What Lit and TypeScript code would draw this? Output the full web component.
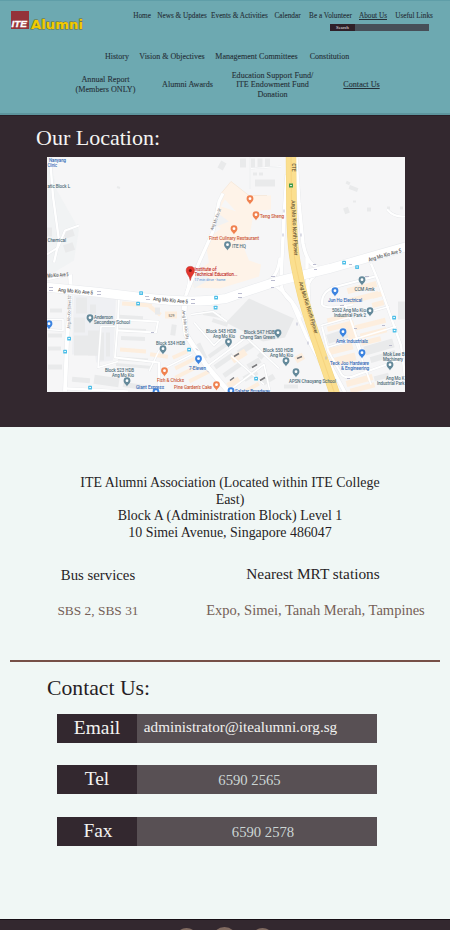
import { LitElement, html, svg, css } from "lit";
import { customElement } from "lit/decorators.js";

type Label = [text: string, x: number, y: number, width: number, kind: string, rotate?: number];
type Pin = [x: number, y: number, kind: string];

const LABELS: Label[] = [
  ["Nanyang", 49, 161.2, 17, "shop"],
  ["Clinic", 47.5, 166.2, 9.5, "shop"],
  ["atic Block L", 47.5, 187, 22.5, "place"],
  ["Chemical", 47.5, 241, 18.5, "place"],
  ["Teng Sheng", 260, 217.5, 24, "food"],
  ["First Culinary Restaurant", 209, 239.5, 50, "food"],
  ["ITE HQ", 232, 247.5, 14, "place"],
  ["Institute of", 194.5, 270.5, 22, "main"],
  ["Technical Education...", 194.5, 275.5, 43, "main"],
  ["17 min drive - home", 194.5, 280, 31, "note"],
  ["Mo Kio Ave 5", 47.5, 277, 21, "road", -4],
  ["Ang Mo Kio Ave 5", 58, 291, 35, "road", 5],
  ["Ang Mo Kio Ave 5", 153, 300, 35, "road", 5],
  ["Ang Mo Kio Ave 5", 369, 261, 34, "road", -16],
  ["Ang Mo Kio Street 52", 70, 328, 33, "lane", -88],
  ["Ang Mo Kio St", 213, 230, 23, "lane", -69],
  ["Ang Mo Kio Str", 182, 310, 29, "lane", 82],
  ["CTE", 292, 163, 8, "fly", 90],
  ["Ang Mo Kio North Flyover", 291.5, 200, 55, "fly", 87],
  ["Ang Mo Kio North Flyover", 299, 282, 54, "fly", 73],
  ["Anderson", 94, 318, 19, "place"],
  ["Secondary School", 94, 323, 36, "place"],
  ["Block 534 HDB", 156, 344, 29, "place"],
  ["7-Eleven", 189, 369, 17, "shop"],
  ["Block 523 HDB", 105, 371, 29, "place"],
  ["Ang Mo Kio", 112, 376, 22, "place"],
  ["Fish & Chicks", 157, 381.5, 27, "food"],
  ["Giant Express", 136, 388, 28, "shop"],
  ["Pine Garden's Cake", 174, 388, 38, "food"],
  ["Block 543 HDB", 206, 332, 30, "place"],
  ["Ang Mo Kio", 213, 337, 22, "place"],
  ["Block 547 HDB", 244, 333, 31, "place"],
  ["Cheng San Green", 240, 338, 35, "place"],
  ["Block 550 HDB", 263, 351, 30, "place"],
  ["Ang Mo Kio", 270, 356, 23, "place"],
  ["APSN Chaoyang School", 289, 382.5, 47, "place"],
  ["Salatar Broadway", 235, 392.3, 35, "shop"],
  ["CCM Amk", 354.5, 290.5, 20, "place"],
  ["Jun Ho Electrical", 328, 301.5, 34, "shop"],
  ["5062 Ang Mo Kio", 332, 311.5, 34, "place"],
  ["Industrial Park 2", 334, 316.5, 32, "place"],
  ["Amk Industrials", 336, 342.5, 32, "shop"],
  ["Teck Joo Hardware", 330, 364, 39, "shop"],
  ["& Engineering", 341, 369, 28, "shop"],
  ["Mok Lee B", 383, 355, 21.5, "place"],
  ["Machinery", 383, 360, 20, "place"],
  ["Ang Mo K", 386, 379, 18.5, "place"],
  ["Industrial Park", 377, 384, 27.5, "place"],
  ["529", 168.5, 316, 6, "tag"],
];

const PINS: Pin[] = [
  [250, 199, "food"], [256, 215, "food"], [234, 229, "food"], [227.5, 245, "place"],
  [90, 318, "place"], [163, 349, "place"], [198.5, 359, "shop"], [164.5, 371, "food"],
  [127, 381, "place"], [216.5, 385, "food"], [228.5, 342, "place"], [278, 333, "place"],
  [286, 361, "place"], [296, 372, "place"], [231, 391, "shop"], [362, 280, "place"],
  [335, 291, "shop"], [370, 311, "place"], [343, 332, "shop"], [362, 353, "shop"],
  [390, 365, "place"], [49, 324, "shop"], [156, 392, "shop"],
];

const STOPS = [
  [141, 292.5], [138, 303], [69, 338], [65, 351], [90, 387], [189, 349], [216, 297],
  [215.5, 307], [344, 262], [357, 266.5], [394, 317], [394.5, 330], [256, 378],
];

// x, y, width, height, rotation, kind
const BUILDINGS: [number, number, number, number, number, string][] = [
  [240, 158, 6, 9, 0, "g"], [250, 158, 5, 9, 0, "g"], [257.5, 158, 5, 9, 0, "g"], [265, 158, 5, 9, 0, "g"],
  [253, 172, 4, 3, 0, "g"], [259, 172, 4, 3, 0, "g"], [255, 179, 20, 7, 0, "g"],
  [219, 161, 6, 8, 28, "g"], [349, 186, 9, 4, 20, "g"], [346, 181, 4, 3, 25, "g"],
  [344, 207, 5, 6, -20, "g"], [367, 207, 4, 4, 0, "g"], [387, 206, 3, 3, 0, "g"], [400, 206, 3, 3, 0, "g"],
  [117, 186, 3, 2, 20, "g"], [353, 200, 3, 2, 0, "g"],
  [64, 230, 10, 7, -18, "g"], [64, 243, 10, 8, -18, "g"], [47, 227, 5, 9, 0, "g"],
  [76, 297, 11, 16, 0, "g"], [74, 317, 11, 15, 0, "g"], [74, 335, 26, 20, 0, "g"], [88, 330, 14, 25, 0, "g"],
  [90, 304, 6, 9, 0, "g"], [50, 308, 12, 4, 0, "g"], [48, 333, 14, 4, 0, "g"], [48, 346, 13, 4, 0, "g"], [48, 364, 14, 5, 0, "g"],
  [118, 328, 28, 4, 2, "g"], [121, 336, 24, 4, 2, "g"], [120, 348, 26, 4, 4, "o"], [150, 353, 18, 4, 8, "o"],
  [118, 357, 30, 4, 4, "g"], [116, 364, 36, 3, 5, "g"], [99, 332, 5, 28, 0, "g"], [106, 332, 4, 24, 0, "g"],
  [122, 302, 30, 4, 4, "o"], [148, 308, 14, 4, 38, "o"], [119, 315, 24, 4, 3, "g"],
  [155, 307, 5, 7, 0, "g"], [165, 311, 12, 7, 0, "o"], [171, 324, 5, 11, 8, "g"],
  [94, 376, 25, 9, 8, "g"], [123, 383, 22, 5, 8, "g"], [72, 377, 18, 5, 5, "g"],
  [172, 352, 16, 4, -24, "o"], [174, 361, 22, 4, -27, "o"], [174, 370, 23, 4, -27, "o"], [188, 374, 22, 4, -27, "o"],
  [203, 312, 18, 4, 10, "g"], [200, 342, 4, 17, -25, "g"], [212, 320, 16, 4, 18, "g"], [207, 348, 21, 4, -35, "g"],
  [213, 358, 22, 5, -35, "g"], [222, 367, 20, 5, -35, "g"], [237, 345, 18, 6, -32, "g"], [231, 352, 16, 7, -32, "o"],
  [247, 360, 14, 6, -30, "g"], [258, 352, 6, 6, 40, "g"], [243, 372, 15, 6, -30, "g"], [227, 379, 13, 6, -30, "o"],
  [262, 376, 13, 6, -30, "g"], [295, 354, 9, 7, -30, "o"], [284, 384, 14, 4, 0, "g"], [244, 385, 16, 4, -30, "o"],
  [347, 284, 30, 6, -14, "o"], [349, 294, 30, 6, -14, "o"], [372, 292, 10, 5, -14, "o"], [372, 301, 12, 5, -14, "o"],
  [327, 315, 24, 5, -14, "o"], [327, 323, 27, 5, -14, "o"], [355, 321, 31, 5, -14, "o"], [327, 331, 22, 9, -18, "g"],
  [347, 325, 9, 14, -17, "o"], [360, 330, 27, 5, -14, "o"], [327, 345, 26, 7, -14, "o"], [361, 338, 20, 5, -14, "o"],
  [364, 342, 30, 9, -16, "g"], [331, 355, 25, 8, -15, "o"], [370, 353, 26, 6, -16, "g"], [346, 377, 27, 6, -15, "o"],
  [374, 374, 15, 5, -15, "g"], [398, 301, 8, 18, 0, "g"], [350, 385, 25, 5, -15, "o"],
];

const ROADS: [string, number][] = [
  ["M50 157 L53 196 L59 240 L54 262", 2.4],
  ["M79 225 L65 230 L58 247 L47 254", 2],
  ["M47 279 L69 274", 2], ["M70 274 L71 289 L67 340 L65 391", 4],
  ["M223 193 L219 201 L213 231 L199 262 L185 297", 3.2],
  ["M185 297 L184 314 L186 334 L207 366 L231 394", 5],
  ["M186 292 Q190 282 188 276", 2], ["M119 296 L118 319 L115 357 L159 362 L159 391", 2],
  ["M116 319 L158 321 L156 332 L118 330", 2], ["M118 361 L98 367 L101 326 L115 326", 1.6],
  ["M47 319 L63 319 L63 330 L47 329", 1.6], ["M67 388 L128 391", 2.4],
  ["M159 350 L149 371 M166 367 L192 354", 1.5],
  ["M287 174 L284 216 L281 279 Q279 290 292 302 L307 337 L323 366 L333 392", 3.5],
  ["M296 157 L299 203 L303 243 Q307 265 319 267 M307 257 L307 276 Q309 287 308 304 L323 351 L345 392", 3.5],
  ["M280 257 Q278 278 264 283 M275 285 Q293 297 301 317", 3],
  ["M321 272 Q309 276 307 290", 2.4],
  ["M250 157 L250 188 M251 168 L281 166", 0.9],
  ["M387 209 Q394 217 405 216", 2.2],
  ["M371 263 L378 280 L401 345 L405 376", 2.4],
  ["M375 276 L337 286 Q321 290 322 304 Q325 309 347 305 L353 304", 2.2],
  ["M345 304 L353 326 L362 354 M322 326 L328 350 L341 373 Q345 380 358 374 L401 359", 2],
  ["M321 325 L389 306 M327 347 L396 326 M356 342 L371 384", 1.8],
  ["M191 314 L213 311 L227 321 M194 322 L214 345 L229 331 M203 369 L246 337 L279 368", 1.7],
  ["M228 391 L264 364 L270 391 M231 355 L264 384", 1.6],
];

@customElement("location-map")
class LocationMap extends LitElement {
  static styles = css`
    :host { display: block; width: 358px; height: 235px; }
    svg { display: block; width: 100%; height: 100%; }
    text { font-family: Roboto, "Liberation Sans", sans-serif; font-size: 5.2px; stroke-width: 0.12px; }
    text.place { fill: #557280; stroke: #557280; }
    text.shop { fill: #3a70ba; stroke: #3a70ba; }
    text.food { fill: #cf5f42; stroke: #cf5f42; }
    text.main { fill: #c4302c; stroke: #c4302c; font-size: 5.4px; }
    text.note { fill: #4d8bd6; font-size: 4px; }
    text.road { fill: #5c5c60; stroke: #5c5c60; }
    text.lane { fill: #77777c; font-size: 4.3px; }
    text.fly { fill: #6a5937; stroke: #6a5937; }
    text.tag { fill: #4c4c4c; font-size: 3.6px; }
    .g { fill: #e9eaeb; }
    .o { fill: #fdeede; }
    .pin.food { fill: #f0814f; }
    .pin.shop { fill: #3b83e0; }
    .pin.place { fill: #64899a; }
  `;

  render() {
    return html`<svg viewBox="47 156.5 358 235" preserveAspectRatio="none">
      <rect x="47" y="156" width="358" height="236" fill="#f6f6f7" />
      <path d="M47 157 L50 157 L57 190 L79 229 L74 260 L47 276Z" fill="#f1f3f4" />
      <path d="M74 295 L116 298 L113 360 L96 362 L95 353 L72 354Z" fill="#eff0f3" />
      <path d="M221 193 L231 181 L249 195 L271 195 L271 209 L254 211 L250 233 L243 245 L249 260 L261 264 L259 276 L220 288 L193 287 L192 276 L209 262 L206 245 L209 237 L221 228 L214 224 L220 207Z" fill="#fef3e8" />
      <path d="M221 193 L231 181 L249 195 L267 195" fill="none" stroke="#f4e2d0" stroke-width=".6" />
      <path d="M225 199 L236 211 L221 206Z" fill="#f6f6f7" />
      <path d="M218 213 L229 221 L214 227Z M192 278 L199 268 L210 279 L194 288Z" fill="#f1f2f3" />
      <path d="M249 298 L294 318 L285 337 L263 341 L226 322Z" fill="#e9eaeb" />
      ${ROADS.map(([d, w]) => svg`<path d=${d} fill="none" stroke="#e4e6e9" stroke-width=${w + 0.7} stroke-linejoin="round" />`)}
      ${BUILDINGS.map(([x, y, w, h, r, k]) => svg`<rect class=${k} x=${x} y=${y} width=${w} height=${h} transform="rotate(${r} ${x + w / 2} ${y + h / 2})" />`)}
      ${ROADS.map(([d, w]) => svg`<path d=${d} fill="none" stroke="#fff" stroke-width=${w} stroke-linejoin="round" />`)}
      <path d="M45 286.5 L100 292 L150 298 Q195 303 226 298 Q258 287 280 280 L330 268 L407 246" fill="none" stroke="#e8eaed" stroke-width="10" />
      <path d="M45 286.5 L100 292 L150 298 Q195 303 226 298 Q258 287 280 280 L330 268 L407 246" fill="none" stroke="#fff" stroke-width="9" />
      <path d="M291 155 L291.5 208 Q292 250 297 270 Q302 296 311 324 L335 394" fill="none" stroke="#f2d583" stroke-width="10.5" />
      <path d="M291 155 L291.5 208 Q292 250 297 270 Q302 296 311 324 L335 394" fill="none" stroke="#fbdf8f" stroke-width="9.5" />
      <path d="M291 155 L291.5 208 Q292 250 297 270 Q302 296 311 324 L335 394" fill="none" stroke="#f3cf77" stroke-width=".7" />
      <path d="M49 287h4M49 290h4M97 291h4M97 294h4M145 296h4M146 299h4M191 299h4M191 303h4M238 293h4M238 297h4M271 276h4M271 280h4M271 287h3M313 264h3M314 269h3M349 264h3M284 209v3M283 233v3M301 233v3M297 322v3M308 341v3M314 321v3M326 356v3M151 332h3M196 348l2 2M207 370l2 2M340 305h4M354 328h3M365 276h4M382 325h3M389 345h3M347 378h3" stroke="#a9abc4" stroke-width=".8" fill="none" />
      <rect x="289" y="183" width="4" height="4" fill="#3f9a4c" />
      <path d="M290 185h2" stroke="#fff" stroke-width=".8" />
      ${STOPS.map(([x, y]) => svg`<rect x=${x - 1.8} y=${y - 1.8} width="3.8" height="3.8" rx=".6" fill="#4fbfe8" /><path d="M${x - 0.7} ${y}h1.6" stroke="#fff" stroke-width="1.1" />`)}
      <path d="M234 356l5-3M252 367l5-3M230 380l4-3M260 380l5-3M297 358l5-2" stroke="#77777a" stroke-width="1.5" />
      ${PINS.map(([x, y, k]) => svg`<g transform="translate(${x} ${y})"><path class="pin ${k}" d="M0 5 C-.5 3 -3.4 2 -3.4 -.8 A3.4 3.4 0 0 1 3.4 -.8 C3.4 2 .5 3 0 5Z" /><circle cy="-.8" r="1.4" fill="#fff" /></g>`)}
      ${LABELS.map(([t, x, y, w, k, r]) => svg`<text class=${k} x=${x} y=${y} textLength=${w} lengthAdjust="spacingAndGlyphs" transform="rotate(${r ?? 0} ${x} ${y})">${t}</text>`)}
      <path d="M190.3 280 C189.5 275 186.2 273.5 186.2 270 A4.1 4.1 0 0 1 194.4 270 C194.4 273.5 191.1 275 190.3 280Z" fill="#e5352d" stroke="#b92722" stroke-width=".5" />
      <circle cx="190.3" cy="270" r="1.5" fill="#7d1714" />
    </svg>`;
  }
}

@customElement("app-root")
class AppRoot extends LitElement {
  static styles = css`
    :host {
      display: block; width: 450px; height: 930px; overflow: hidden;
      background: #f0f7f5; color: #271e25;
      font-family: "Liberation Serif", serif;
    }
    * { box-sizing: border-box; }
    header {
      height: 115px; background: #6da9b1; color: #263038;
      border-top: 1px solid #5f9ea8; border-bottom: 2px solid #5d959d;
    }
    .top { display: flex; height: 46px; }
    .brand { display: flex; width: 120px; padding: 9px 0 0 11px; }
    .brand svg { display: block; width: 76px; height: 22px; overflow: visible; }
    .tools { display: flex; flex-direction: column; }
    .main {
      display: grid; height: 21px; padding-top: 9.5px; margin-left: 6px;
      grid-template-columns: 32px 48px 67px 29px 57px 28px 54px;
      font-size: 7.25px; line-height: 10px; white-space: nowrap; text-align: center;
      -webkit-text-stroke: 0.1px #263038;
    }
    .main span { display: flex; justify-content: center; }
    u { text-decoration-thickness: 0.6px; text-underline-offset: 1px; }
    .search { display: flex; width: 99px; height: 7px; margin: 2px 0 0 210px; background: #474f58; }
    .search span { width: 25px; background: #2f2028; color: #eee; font: 4.7px/7px "Liberation Serif", serif; text-align: center; }
    .sub {
      display: grid; height: 20px; line-height: 20px; margin-left: 105px; justify-content: start;
      grid-template-columns: 24px 86px 83px 63px; font-size: 8px; text-align: center; white-space: nowrap;
      -webkit-text-stroke: 0.1px #263038;
    }
    .third {
      display: grid; height: 38px; align-items: center; justify-content: start; margin: -1px 0 0 71px;
      grid-template-columns: 69px 95px 75px 103px; font-size: 8.15px; line-height: 9.6px;
      text-align: center; white-space: nowrap; -webkit-text-stroke: 0.1px #263038;
    }
    .third span { margin: 0 -8px; }
    .location { height: 312px; padding: 10px 0 0 47px; background: #33282f; color: #f4f4f2; border-top: 1px solid #291f27; }
    h2 { margin: 0; font-weight: 400; font-size: 22px; line-height: 24px; }
    .location h2 { margin: 0 0 6.5px -11px; height: 24px; }
    .address { margin: 0; padding-top: 48px; width: 460px; text-align: center; font-size: 13.93px; line-height: 16.7px; }
    .transport { display: grid; grid-template-columns: 196px 239px; text-align: center; padding-top: 21px; height: 118px; }
    .transport dl { margin: 0; }
    .transport dt { font-size: 14.8px; line-height: 24px; height: 36px; }
    .transport dd { margin: 0; font-size: 13.4px; line-height: 24px; color: #755f57; }
    .mrt dt { font-size: 15.35px; margin: -1px 5px 0 0; height: 36px; }
    .mrt dd { font-size: 14.5px; }
    .rule { height: 2px; margin: 0 10px; background: #765047; }
    .contact { padding: 14px 0 0 57px; height: 257.2px; }
    .contact h2 { margin: 0 0 14px -10px; font-size: 21.7px; }
    .entry { display: flex; width: 320px; height: 29px; margin-bottom: 22px; background: #585054; color: #f1f1ef; text-align: center; }
    .entry span { flex: none; }
    .entry + .entry { color: #ccd6d4; }
    .entry + .entry + .entry { margin-top: 23px; }
    .key { width: 80px; background: #33282f; color: #f3f3f1; font-size: 19.4px; line-height: 27px; }
    .fax-key { padding-left: 2px; }
    .val { width: 207px; font-size: 15.2px; line-height: 26px; }
    .tel { width: 225px; font-size: 14.7px; line-height: 30px; }
    .fax { width: 252px; font-size: 14.7px; line-height: 30px; }
    footer { display: flex; justify-content: center; gap: 14px; height: 11px; padding: 8px 2px 0 0; overflow: hidden; background: #33282f; border-top: 1px solid #170f15; }
    footer i { width: 23px; height: 23px; border-radius: 50%; background: #806a60; flex: none; }
    footer i:nth-child(2) { margin-top: -1px; width: 25px; height: 25px; }
  `;

  render() {
    return html`
      <header>
        <div class="top">
          <div class="brand">
            <svg viewBox="11 10 76 22">
              <rect x="11" y="11" width="18" height="18" fill="#943239" />
              <path d="M11 22h18M11 26.8h18" stroke="#ad5359" stroke-width=".5" />
              <text x="11.5" y="27" textLength="15.5" lengthAdjust="spacingAndGlyphs" font-family="Liberation Sans, sans-serif" font-size="8.5" font-style="italic" font-weight="700" fill="#fff" stroke="#fff" stroke-width=".3">ITE</text>
              <text x="31" y="28.8" textLength="52" lengthAdjust="spacingAndGlyphs" font-family="DejaVu Sans, sans-serif" font-size="13" font-weight="700" fill="#f2cb00" stroke="#6c7032" stroke-width="1" paint-order="stroke">Alumni</text>
            </svg>
          </div>
          <div class="tools">
            <nav class="main">
              <span>Home</span><span>News &amp; Updates</span><span>Events &amp; Activities</span><span>Calendar</span><span>Be a Volunteer</span><span><u>About Us</u></span><span>Useful Links</span>
            </nav>
            <div class="search"><span>Search</span></div>
          </div>
        </div>
        <nav class="sub">
          <span>History</span><span>Vision &amp; Objectives</span><span>Management Committees</span><span>Constitution</span>
        </nav>
        <nav class="third">
          <span>Annual Report<br />(Members ONLY)</span><span>Alumni Awards</span><span>Education Support Fund/<br />ITE Endowment Fund<br />Donation</span><span><u>Contact Us</u></span>
        </nav>
      </header>
      <section class="location">
        <h2>Our Location:</h2>
        <location-map></location-map>
      </section>
      <p class="address">ITE Alumni Association (Located within ITE College<br />East)<br />Block A (Administration Block) Level 1<br />10 Simei Avenue, Singapore 486047</p>
      <div class="transport">
        <dl><dt>Bus services</dt><dd>SBS 2, SBS 31</dd></dl>
        <dl class="mrt"><dt>Nearest MRT stations</dt><dd>Expo, Simei, Tanah Merah, Tampines</dd></dl>
      </div>
      <div class="rule"></div>
      <section class="contact">
        <h2>Contact Us:</h2>
        <div class="entry"><span class="key">Email</span><span class="val">administrator@itealumni.org.sg</span></div>
        <div class="entry"><span class="key">Tel</span><span class="tel">6590 2565</span></div>
        <div class="entry"><span class="key fax-key">Fax</span><span class="fax">6590 2578</span></div>
      </section>
      <footer><i></i><i></i><i></i></footer>
    `;
  }
}
